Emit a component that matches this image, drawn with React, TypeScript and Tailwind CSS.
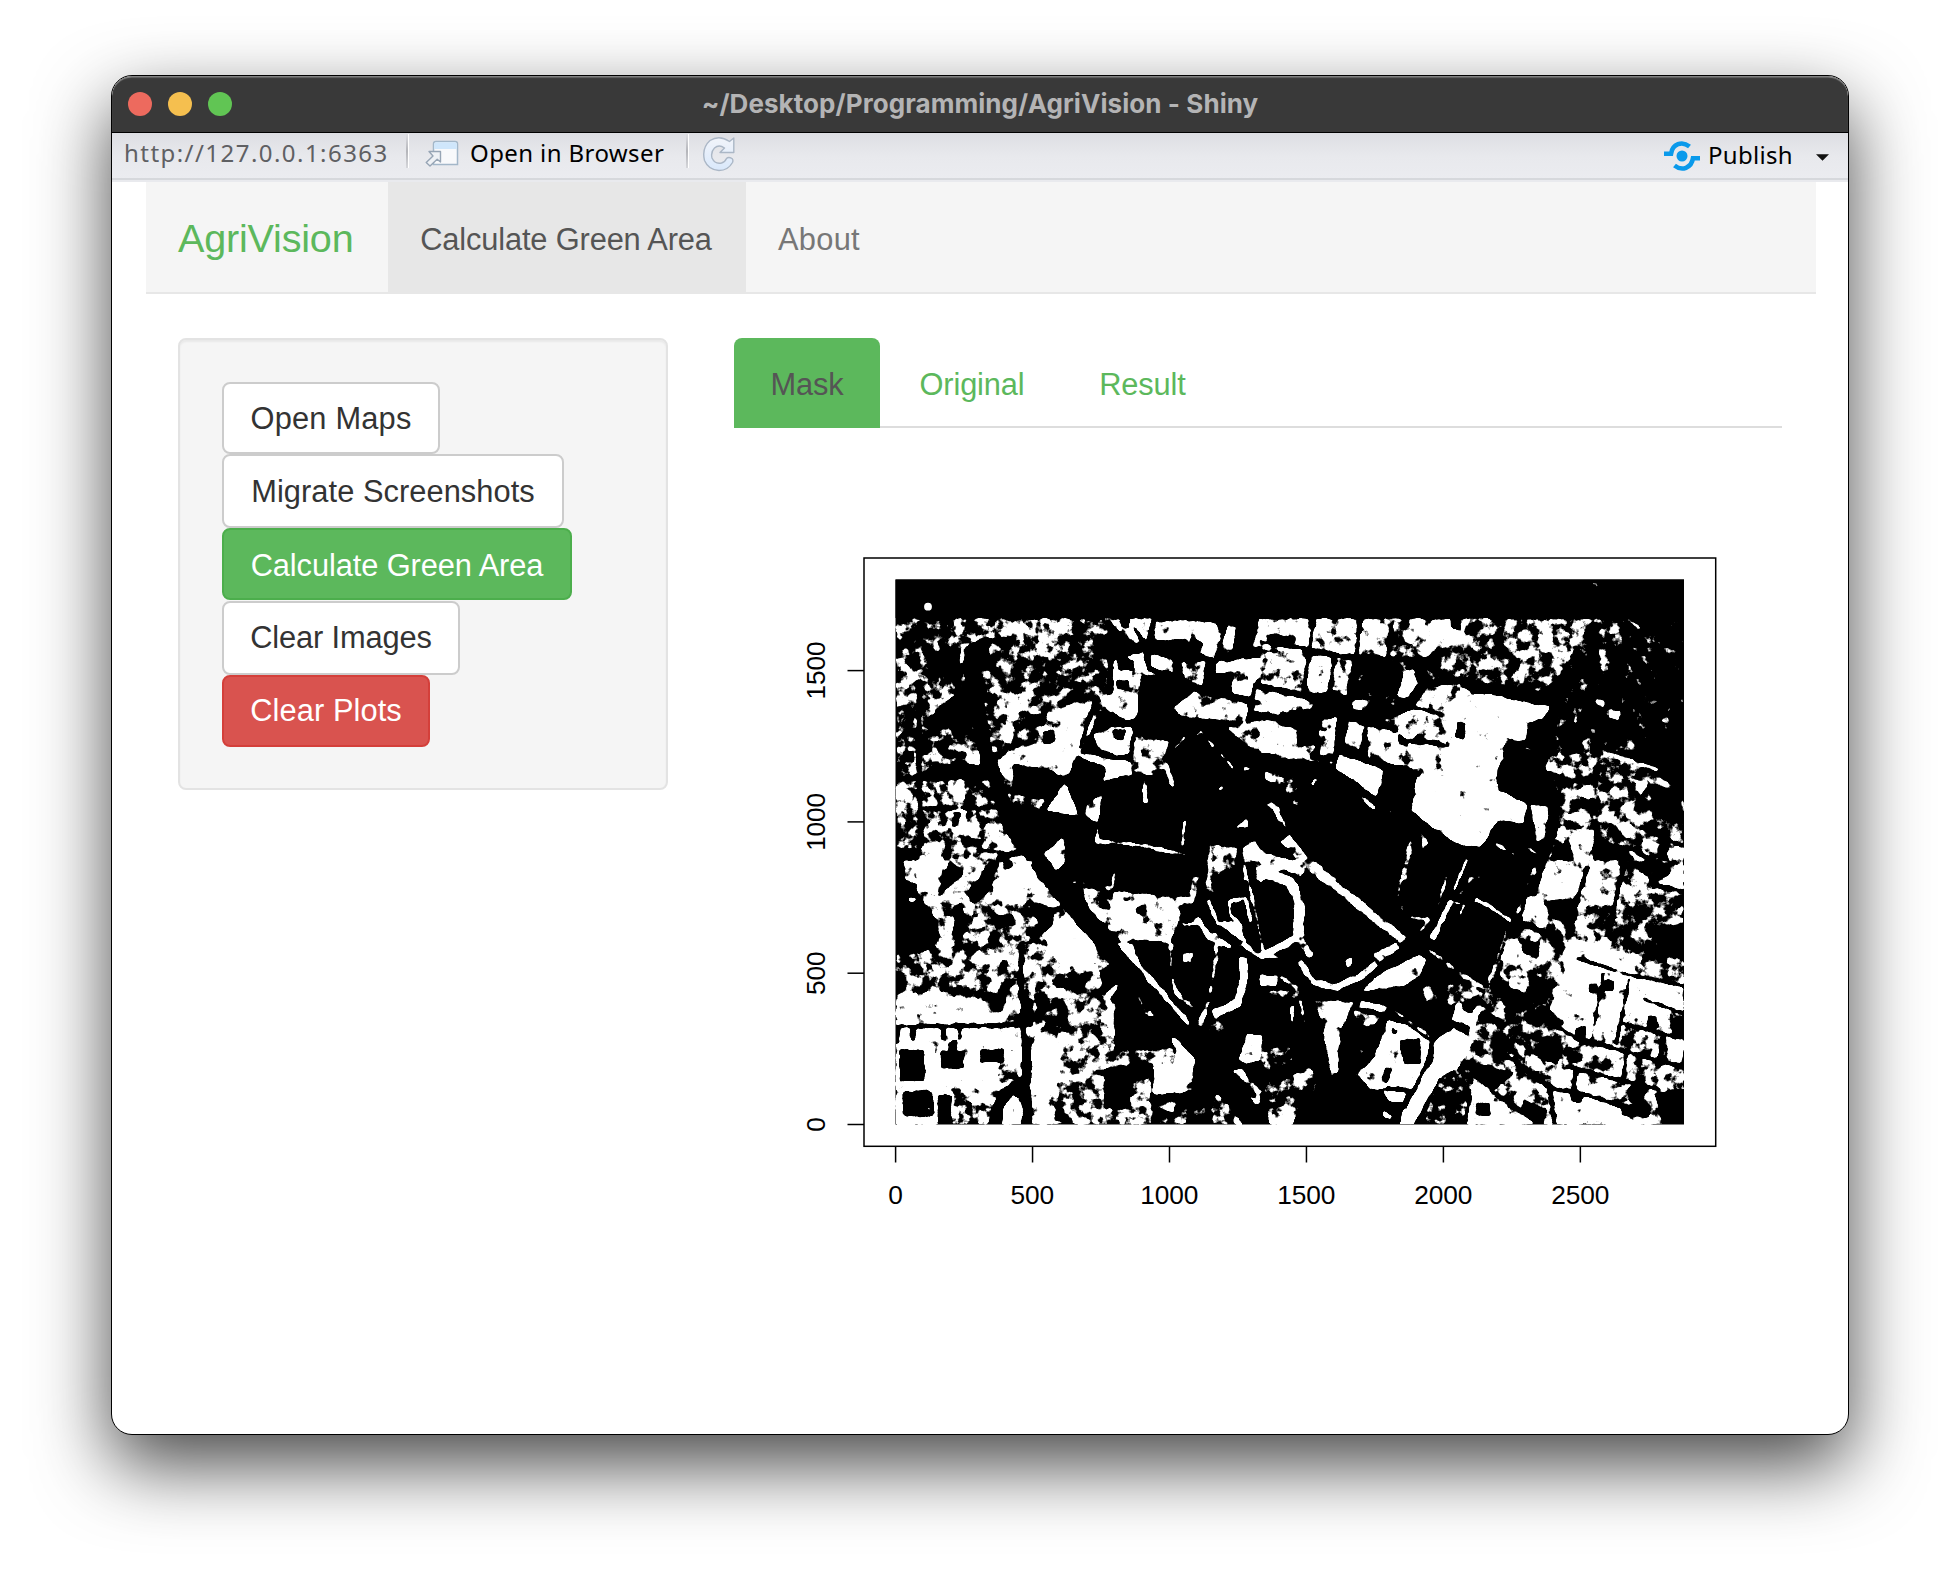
import React from 'react';

type Shape = [number, string];
type Stroke = [number, number, string];

interface Tile {
  x: number;
  y: number;
  areas: Shape[];
  strips: Stroke[];
  roads: [number, string][];
}

/* Vegetation density per area: 0 is bare, 1 is fully covered. */
const tiles: Tile[] = [
  {
    x: 0,
    y: 0,
    areas: [
      [0.44, '347,235 985,235 985,480 900,620 640,640 347,720'],
      [0.36, '347,270 500,290 520,440 347,350'],
      [0.47, '347,720 700,720 700,930 347,930'],
      [0.6, '665,240 880,235 860,345 780,330 740,290 660,295'],
      [0.6, '670,270 760,270 760,300 665,295'],
      [0.76, '985,235 1115,235 1100,320 1060,310 1000,260'],
      [0.76, '1125,245 1230,240 1310,245 1330,290 1310,360 1230,330 1220,300 1120,300'],
      [0.7, '1430,235 1500,235 1500,330 1420,320'],
      [0.74, '1335,250 1375,260 1355,340 1325,345'],
      [0, '1370,262 1422,258 1412,362 1356,350'],
      [0, '1235,295 1270,310 1260,335 1225,325'],
      [0, '1140,300 1185,300 1180,330 1145,325'],
      [0, '1020,240 1050,240 1045,265 1025,262'],
      [0.8, '1310,365 1500,345 1500,410 1430,420 1410,470 1365,465 1305,400'],
      [0, '1310,402 1360,400 1355,460 1305,450'],
      [0.7, '1180,500 1240,455 1405,490 1400,550 1200,530'],
      [0.72, '1425,445 1500,455 1500,525 1420,510'],
      [0.66, '1340,560 1500,530 1500,650 1400,620'],
      [0.76, '1000,360 1090,335 1105,390 1180,440 1085,410 1080,530 1040,545 940,480 1000,460'],
      [0, '1010,350 1060,360 1060,390 1020,390'],
      [0, '1010,420 1045,420 1045,448 1012,445'],
      [0.76, '1105,340 1180,355 1180,400 1110,380'],
      [0.66, '1200,365 1275,365 1270,440 1215,420'],
      [0, '1085,412 1130,405 1180,435 1180,500 1205,535 1260,560 1180,610 1160,580 1065,565'],
      [0.76, '940,580 1000,560 1060,560 1050,640 1010,650 950,620'],
      [0, '1000,570 1040,570 1030,600 1005,595'],
      [0.62, '1065,585 1168,600 1145,715 1045,690'],
      [1, '900,638 1050,665 1055,705 970,722 980,682 895,652'],
      [0.78, '880,490 945,490 940,560 860,715 800,690 700,672 660,650 720,620 800,610 770,560 810,520'],
      [0, '745,530 800,520 790,560 750,555'],
      [0, '785,575 820,570 825,605 790,610'],
      [0.76, '650,460 740,460 740,500 710,520 695,610 670,600 680,530 650,490'],
      [0.68, '347,350 380,355 400,420 347,490'],
      [0.64, '450,500 530,500 520,540 460,530'],
      [0.7, '347,620 415,620 410,670 347,670'],
      [0, '370,635 400,635 400,665 370,665'],
      [0.74, '560,630 605,630 600,680 560,670'],
      [0.6, '400,460 550,465 550,500 410,485'],
      [0.85, '503,718 552,718 550,782 522,782'],
      [0.62, '347,720 410,740 410,820 347,830'],
      [0.76, '455,750 480,800 440,800'],
      [0.76, '495,808 585,810 605,900 540,880 495,870'],
      [0, '520,815 545,815 535,860 518,860'],
      [0.85, '810,790 855,725 900,830 800,812'],
      [0.58, '700,760 800,780 780,810 700,790'],
      [0.8, '920,790 970,760 955,850 910,830'],
      [0.85, '430,910 495,915 490,1020 395,1020'],
      [0.58, '515,920 655,930 640,1020 500,1020'],
      [0.64, '610,860 665,850 670,935 610,930'],
      [0.78, '680,880 718,930 670,940'],
      [0.85, '690,950 735,940 800,1020 660,1020'],
      [0.8, '635,655 700,655 700,720 675,720'],
      [0.9, '786,945 850,890 845,980 826,992'],
      [0.54, '1285,910 1370,920 1370,980 1285,1020'],
      [0.7, '1385,920 1425,905 1480,960 1480,1020 1390,1020'],
      [0, '1400,970 1425,970 1430,1020 1400,1020'],
      [0.65, '1460,700 1500,690 1500,730 1470,730'],
      [0.65, '1465,780 1500,800 1500,860'],
      [0.85, '1360,865 1400,835 1410,865'],
      [0.85, '1390,680 1415,680 1410,695 1390,695'],
      [0, '550,300 625,295 630,380 560,380'],
      [0, '440,340 540,330 530,410 450,400'],
      [0, '420,560 600,400 620,450 560,570'],
    ],
    strips: [
      [0.72, 12, '945,903 1080,915 1220,945'],
      [0.72, 10, '1215,840 1205,925'],
      [0.72, 10, '955,850 950,905'],
      [0.75, 14, '1092,715 1096,790'],
      [0.55, 16, '1155,665 1180,745'],
      [0.78, 8, '1185,625 1215,590'],
      [0.8, 8, '1245,590 1262,575 1300,618'],
      [0.8, 8, '1320,640 1360,685'],
      [0.68, 10, '855,895 850,975'],
      [0.75, 12, '1315,750 1330,740'],
      [0.62, 6, '1005,940 1000,1020'],
      [0.74, 14, '545,370 550,320 600,292 640,285'],
    ],
    roads: [
      [38, '560,330 590,480 610,610 640,700 690,860'],
      [48, '690,850 820,1020'],
      [8, '1120,235 1102,380'],
      [8, '985,335 1080,318 1200,340 1310,368'],
      [9, '1342,240 1306,372'],
      [9, '1060,260 1100,320'],
      [9, '1180,440 1420,485 1500,500'],
      [7, '1430,235 1412,350'],
      [8, '1412,322 1500,335'],
      [8, '1425,430 1402,550'],
      [8, '1200,345 1190,450'],
      [9, '945,480 900,625'],
      [7, '420,806 660,802'],
      [6, '590,930 720,942'],
      [10, '1280,370 1290,450'],
      [9, '870,460 960,480'],
      [10, '420,420 415,640 425,900'],
    ],
  },
  {
    x: 1440,
    y: 0,
    areas: [
      [0.7, '0,235 200,235 390,235 380,350 0,330'],
      [0, '20,285 105,290 100,312 20,305'],
      [0.48, '390,235 1000,235 960,380 880,460 700,435 540,400 390,350'],
      [0.22, '360,350 540,350 540,410 480,480 400,500 280,450 280,385'],
      [0.78, '450,240 620,240 610,300 500,345 440,300'],
      [0, '570,240 600,240 600,270 575,265'],
      [0.62, '800,240 1000,240 960,370 880,350 780,300'],
      [0.24, '1000,235 1272,235 1272,640 880,640 900,400'],
      [0.42, '990,240 1100,240 1060,310 1000,320'],
      [0.48, '1010,320 1040,330 1030,420'],
      [0.42, '1110,320 1180,320 1180,400'],
      [0.7, '1005,480 1035,480 1030,500 1010,495'],
      [0.85, '1050,510 1082,515 1075,540 1050,535'],
      [0.9, '940,530 952,530 950,550 942,550'],
      [0.68, '0,335 140,335 130,460 0,430'],
      [0.82, '145,345 218,350 205,460 140,460'],
      [0.68, '228,350 278,360 262,470 215,450'],
      [0.72, '0,450 90,465 170,490 150,510 0,520'],
      [0.76, '0,535 120,570 170,620 150,660 0,640'],
      [0, '110,570 170,575 165,615 115,615'],
      [0.2, '170,455 240,470 240,520 180,510'],
      [0.62, '175,540 232,530 222,650 180,650'],
      [0.7, '270,480 332,480 330,515 280,510'],
      [0.7, '265,540 315,560 300,630 240,610'],
      [0.75, '322,560 400,570 450,610 560,620 520,700 320,655'],
      [0, '415,570 450,590 440,620 415,605'],
      [1, '435,395 462,388 472,430 440,475 412,465 422,430'],
      [0.68, '470,490 500,440 600,430 660,480 600,620 560,620 440,560'],
      [0.68, '370,540 470,500 540,530 560,600 440,600'],
      [0.9, '570,490 650,460 700,465 870,500 850,535 805,550 800,600 750,620 710,690 720,750 802,795 790,850 710,850 660,922 600,915 540,880 450,810 470,710 490,640 580,615'],
      [0.7, '480,640 560,640 520,710 470,700'],
      [0, '590,545 615,550 612,600 588,590'],
      [0.3, '740,590 770,600 830,640 720,690'],
      [0, '760,620 880,640 850,720 830,780 720,750 710,700'],
      [1, '235,640 372,690 350,772 228,685'],
      [0, '372,690 468,712 455,800 440,830 350,780'],
      [0, '715,840 790,855 700,900 690,880'],
      [0.46, '870,640 1000,640 1120,660 1272,760 1272,960 1000,900 900,880 880,760'],
      [0.2, '1160,720 1260,760 1272,850 1180,830'],
      [0.58, '970,600 1000,590 990,640 950,650'],
      [0.74, '860,645 912,650 900,705 860,690'],
      [0.88, '935,760 1000,730 990,775'],
      [0.7, '910,818 1010,828 1000,850 910,840'],
      [0.66, '1030,830 1120,780 1130,880 1080,870'],
      [0.8, '1125,720 1162,730 1140,775'],
      [0.78, '890,860 1005,870 1000,960 940,960 890,900'],
      [0, '890,915 930,910 940,970 880,970'],
      [0.8, '1150,895 1195,915 1170,950 1145,940'],
      [0.8, '1100,925 1160,960 1140,985'],
      [0.8, '1220,940 1272,900 1272,1020 1240,1000'],
      [0.8, '865,975 970,980 970,1020 855,1020'],
      [0.74, '810,790 865,800 855,900 830,905'],
      [0.38, '30,670 120,720 110,800 40,780'],
      [0.7, '15,690 50,700 40,730 15,720'],
      [0.64, '480,870 510,910 485,935'],
      [0.4, '1180,940 1230,970 1200,1010 1160,990'],
    ],
    strips: [
      [0.75, 14, '1030,640 1110,660 1195,692'],
      [0.9, 6, '1105,238 1135,262 1155,295'],
      [0.85, 7, '705,910 765,945'],
      [0.88, 7, '622,955 597,1020'],
      [0.64, 34, '75,895 130,960 220,1030'],
      [0.8, 8, '20,790 60,830 85,875'],
      [0.56, 14, '455,900 435,1020'],
      [0.72, 30, '0,950 60,965 130,1000'],
      [0.68, 12, '300,770 345,805'],
      [0.8, 9, '155,735 170,715'],
      [0.72, 6, '385,812 440,830'],
      [0.78, 6, '835,965 820,1020'],
      [0.74, 8, '790,915 835,945'],
      [0.66, 10, '60,650 220,668'],
      [0.8, 6, '890,890 860,980'],
      [0.6, 10, '1040,860 1130,900 1120,780'],
      [0.8, 5, '772,612 830,637'],
    ],
    roads: [
      [9, '0,305 160,330 390,370'],
      [9, '160,240 132,460'],
      [8, '225,350 200,490'],
      [9, '300,240 285,400 245,620'],
      [9, '0,440 160,480'],
      [9, '0,525 200,570'],
      [6, '470,592 550,616'],
      [6, '340,655 480,705'],
      [7, '380,480 550,525'],
      [9, '390,560 320,540'],
      [12, '505,870 600,920'],
      [8, '1010,860 1000,940'],
      [8, '1140,860 1272,920'],
      [8, '400,240 380,340'],
    ],
  },
  {
    x: 0,
    y: 960,
    areas: [
      [0.64, '347,0 760,0 1240,560 1240,795 347,795'],
      [0, '347,0 372,0 370,60 410,70 412,100 470,180 478,232 430,275 347,285'],
      [0.9, '410,0 490,0 470,100 410,90'],
      [0.9, '385,110 408,115 400,130 385,125'],
      [0, '485,60 510,0 545,45 475,110'],
      [0, '600,50 635,0 655,10 625,90 580,135 560,100'],
      [0, '672,0 695,0 690,40 672,40'],
      [0.54, '520,130 760,110 760,260 520,280'],
      [0, '520,140 545,130 560,210 530,250'],
      [0, '650,165 700,165 690,210 650,205'],
      [0.56, '430,290 720,180 730,400 347,400 347,345'],
      [0.4, '347,310 430,290 470,340 347,350'],
      [0.42, '347,370 560,370 560,395 347,400'],
      [0.8, '347,410 590,410 650,495 347,495'],
      [0.25, '600,400 680,390 670,460 620,440'],
      [0.85, '640,40 760,0 810,70 700,130 640,110'],
      [0.2, '745,120 830,150 800,262 750,240 770,180'],
      [1, '790,225 860,160 900,210 950,260 930,330 830,300'],
      [0.58, '730,330 970,330 980,600 900,640 730,430'],
      [0.25, '830,340 915,335 915,400 830,380'],
      [0.36, '765,410 862,410 860,517 770,512'],
      [0, '735,410 760,420 755,500 735,500'],
      [0.88, '347,505 720,505 725,600 690,690 347,690'],
      [0.6, '640,620 720,600 720,680 640,690'],
      [0, '345,505 362,505 358,550 345,550'],
      [0, '390,500 408,500 406,542 392,542'],
      [0, '482,500 496,500 494,535 484,535'],
      [0, '533,500 546,500 545,540 535,540'],
      [0, '360,570 433,570 433,662 360,662'],
      [0, '483,572 551,572 551,625 483,625'],
      [0, '505,550 530,540 535,575 505,575'],
      [0, '602,570 670,568 670,606 602,606'],
      [0.85, '347,665 470,665 520,700 520,795 347,795'],
      [0, '376,693 454,693 460,700 460,762 454,769 376,769 369,760 369,700'],
      [1, '440,741 453,741 453,753 440,753'],
      [0, '474,705 514,705 514,792 474,792'],
      [0.58, '520,700 640,700 640,795 520,795'],
      [0, '560,725 572,725 572,762 560,762'],
      [0, '640,740 660,690 720,655 745,670 740,700 690,715 670,750 665,795 635,795'],
      [0.9, '670,745 700,700 728,740 722,795 680,795'],
      [0.92, '750,560 780,520 850,570 845,640 830,680 750,680'],
      [0.56, '850,520 960,520 1000,620 970,650 975,750 1110,740 1110,795 850,795 830,680'],
      [0.74, '745,690 830,690 850,795 745,795'],
      [0.1, '825,730 855,725 850,780 825,780'],
      [0, '960,330 1030,320 1140,470 1250,580 1245,600 1190,600 1180,560 1120,570 1005,570 1005,430 970,400'],
      [0.8, '975,400 1020,365 1010,390 985,420'],
      [0.66, '970,500 1003,500 1003,570 975,560'],
      [0, '975,626 1120,605 1120,705 1050,710 1050,745 975,745'],
      [0.52, '990,575 1120,575 1120,610 990,620'],
      [0.52, '1050,660 1115,650 1110,730 1060,725'],
      [1, '1122,620 1235,608 1215,713 1120,706'],
      [0.95, '1170,530 1190,540 1248,600 1235,620 1190,612 1188,570'],
      [0.2, '1115,706 1260,690 1300,795 1115,795'],
      [0.6, '1130,720 1190,730 1180,755 1130,750'],
      [0.74, '900,80 1160,108 1250,110 1200,180 1170,250 1060,240 1030,250 930,150'],
      [0.2, '965,90 1000,95 990,150 960,145'],
      [0.1, '1070,140 1100,135 1095,165 1070,160'],
      [0.95, '1010,250 1060,250 1080,310 1160,400 1230,490 1225,505 1060,310'],
      [0, '1070,250 1130,260 1180,340 1165,400 1080,310'],
      [0, '1180,225 1300,250 1290,420 1240,440 1180,400'],
      [0.76, '1210,280 1240,275 1235,310 1210,305'],
      [0, '1195,140 1255,125 1260,180 1210,170'],
      [0.7, '1070,400 1110,440 1130,470 1090,465'],
      [0.88, '1322,190 1385,190 1400,245 1325,225'],
      [0.66, '1285,0 1305,100 1275,95'],
      [0.85, '1395,0 1475,35 1440,75 1425,20'],
      [0.85, '1440,350 1495,345 1490,378 1450,378'],
      [0.84, '1400,520 1447,525 1445,600 1400,610 1375,600'],
      [0.35, '1280,480 1390,480 1370,525 1280,520'],
      [0.72, '1355,630 1385,625 1450,700 1440,735 1420,730'],
      [0.58, '1310,700 1350,740 1390,795 1300,795 1290,750'],
      [0.4, '1440,570 1500,570 1500,690 1450,680'],
      [0.82, '1470,780 1500,740 1500,795 1470,795'],
      [0.6, '1180,770 1230,770 1210,795 1180,795'],
      [0.7, '1235,45 1255,50 1250,110 1225,105'],
    ],
    strips: [
      [0.68, 14, '1172,250 1172,340 1190,400 1240,445'],
      [0.68, 14, '1310,250 1305,320 1290,400'],
      [0.76, 16, '1285,420 1260,500'],
      [0.92, 26, '1390,290 1392,350 1372,430 1300,462'],
      [0.9, 18, '1250,175 1290,230 1330,255'],
      [0.88, 14, '1300,220 1350,265'],
      [0.92, 12, '1390,250 1430,285 1500,293'],
      [0.9, 10, '1380,190 1352,165 1348,125 1395,113 1412,185'],
      [0.85, 7, '1395,20 1430,170 1452,285'],
      [0.82, 11, '1285,120 1312,190 1380,190'],
      [0.58, 8, '850,60 1000,85'],
      [0.62, 5, '1003,0 998,85'],
      [0.8, 10, '1190,170 1215,195 1250,190'],
    ],
    roads: [
      [52, '770,0 850,100 940,210'],
      [50, '900,160 1060,350 1160,470'],
      [50, '1140,440 1280,600 1430,790'],
      [90, '1290,560 1310,620'],
      [10, '347,500 725,495'],
      [12, '724,260 722,400 730,500 738,600'],
      [26, '740,540 740,795'],
      [16, '1280,160 1330,215 1420,280'],
      [10, '1365,640 1425,710'],
    ],
  },
  {
    x: 1440,
    y: 960,
    areas: [
      [0.6, '860,0 1272,0 1272,795 620,795 640,690 560,620 700,390 740,270 800,190'],
      [0.4, '640,400 740,370 820,330 900,430 850,620 760,640 640,560'],
      [0.15, '700,330 780,400 830,440 760,460 700,400'],
      [0.1, '830,350 890,370 850,430 800,420'],
      [0.82, '860,10 972,25 950,110 830,95'],
      [0.78, '800,110 850,110 860,230 785,185'],
      [0.2, '850,120 960,120 940,210 870,170'],
      [0.78, '985,30 1075,40 1040,130 960,100'],
      [0.2, '1110,10 1200,0 1240,40 1180,70'],
      [0.9, '1200,70 1272,10 1272,90'],
      [0.46, '1000,150 1272,120 1272,290 1150,310 1000,230'],
      [0.2, '1160,200 1272,190 1272,300 1170,280'],
      [0.8, '905,220 1010,260 1150,290 1140,330 1080,540 950,510 870,450 920,330'],
      [0.3, '860,160 900,210 920,270 870,260'],
      [0.84, '1100,350 1272,380 1272,450 1080,480'],
      [0, '840,540 905,555 890,612 838,590'],
      [0, '988,372 1015,368 1012,398 988,398'],
      [0, '1030,362 1062,362 1060,392 1032,390'],
      [0, '948,500 975,500 972,532 948,530'],
      [0, '930,580 970,580 965,605 930,605'],
      [0, '1165,470 1190,470 1190,505 1165,505'],
      [0, '1235,485 1272,490 1272,525 1240,520'],
      [0.58, '1090,500 1200,520 1190,590 1080,560'],
      [0.88, '885,690 1080,735 1130,795 885,795'],
      [0.84, '875,650 945,620 940,690 880,680'],
      [0.7, '950,640 1100,670 1080,725 950,695'],
      [0, '930,700 970,710 965,730 935,725'],
      [0, '1180,700 1272,690 1272,795 1210,795 1200,740'],
      [0, '1080,735 1165,730 1165,770 1090,765'],
      [0, '1110,680 1150,690 1145,730 1110,725'],
      [0.95, '1222,530 1272,540 1262,605 1225,590'],
      [0.82, '1225,615 1250,620 1245,650 1220,640'],
      [0.72, '740,230 860,260 830,330 720,300'],
      [0.05, '775,240 840,245 830,290 790,280'],
      [0.85, '750,350 805,360 790,395 750,380'],
      [0, '560,190 735,200 690,370 515,270'],
      [0.84, '305,395 340,350 480,285 500,300 480,350 420,380'],
      [0.76, '340,280 410,245 420,265 360,310'],
      [0.85, '255,300 275,295 275,320 258,320'],
      [0.8, '160,420 282,425 240,520 235,640 212,652 190,500'],
      [0.76, '300,420 385,440 375,460 300,440'],
      [0.58, '280,450 370,470 340,500 290,500'],
      [0.9, '380,480 440,495 520,550 500,600 460,688 400,680 330,690 292,640 345,590'],
      [0.2, '395,500 420,510 410,525 395,520'],
      [0, '418,540 480,535 482,610 430,612'],
      [0.3, '370,620 395,625 385,670 365,665'],
      [0.1, '250,510 335,500 310,620 290,650 240,660'],
      [1, '520,550 580,500 632,535 600,620 540,650 500,720 460,795 415,795 440,720 520,600'],
      [1, '590,430 665,445 640,502 575,480'],
      [0, '605,430 650,440 635,460 605,450'],
      [0.42, '480,380 640,365 680,420 500,440'],
      [0, '470,450 560,440 560,500 520,525 460,490'],
      [0.84, '640,670 690,690 740,740 830,795 620,795'],
      [0, '650,728 690,728 690,765 655,765'],
      [0.68, '730,520 830,590 890,650 850,660'],
      [0.68, '760,640 860,680 840,740 740,690'],
      [0, '640,610 760,640 700,690 640,650'],
      [0, '790,720 860,750 845,790 790,750'],
      [0.36, '540,650 640,600 640,670 610,795 480,795'],
      [0.54, '0,690 150,620 172,655 130,690 20,700'],
      [0.74, '20,750 70,720 125,740 100,795 30,795'],
      [0.3, '0,700 130,690 125,740 0,740'],
      [0.85, '365,690 440,695 430,730 385,720'],
      [0.85, '370,750 400,770 390,785 368,765'],
      [0.85, '90,440 105,430 100,490 90,485'],
      [0.95, '0,345 40,350 40,378 0,378'],
      [0.38, '0,560 100,560 100,620 0,610'],
      [0.42, '0,390 130,390 120,420 0,410'],
      [0.85, '0,0 120,0 125,40 60,30 20,60 0,60'],
    ],
    strips: [
      [0.76, 28, '120,-5 260,105 430,240'],
      [0.88, 32, '45,50 90,65 118,130 115,230'],
      [0.84, 22, '115,230 60,260 0,290'],
      [0.66, 26, '120,240 155,290'],
      [0.86, 22, '115,300 160,365 230,382 300,350 350,310'],
      [0.92, 7, '620,0 582,90'],
      [0.88, 7, '560,50 535,135'],
      [0.82, 18, '575,120 515,240'],
      [0.86, 8, '580,125 612,135 600,165'],
      [0.68, 14, '635,50 600,105'],
      [0.76, 12, '645,118 690,140 755,185'],
      [0.7, 7, '822,20 770,165'],
      [0.7, 8, '740,210 685,370'],
      [0.64, 14, '500,262 600,340 690,395'],
      [0.62, 14, '440,0 410,110'],
      [0.68, 10, '425,130 430,175'],
      [0.68, 12, '450,170 505,180 480,215'],
      [0.56, 10, '720,300 680,400 690,440'],
      [0.74, 12, '60,350 112,385'],
      [0.6, 8, '120,420 140,510'],
      [0.6, 12, '400,450 510,530'],
      [0.62, 7, '170,650 160,700'],
      [0.64, 12, '1000,170 990,220'],
      [0.72, 10, '660,440 740,480'],
    ],
    roads: [
      [14, '790,190 900,240'],
      [8, '950,295 1110,345 1272,378'],
      [7, '1030,340 995,540'],
      [8, '1108,355 1068,555'],
      [9, '945,535 1100,575 1272,622'],
      [9, '800,440 900,505 950,535'],
      [8, '1150,418 1272,460'],
      [7, '1085,490 1272,537'],
      [10, '985,20 935,160'],
      [9, '1090,20 1050,200'],
      [10, '920,620 1060,655 1200,690'],
      [10, '700,560 800,630 870,685 960,700 1080,738'],
      [9, '868,680 885,795'],
      [7, '948,620 940,700'],
      [7, '1100,580 1088,670'],
      [9, '1210,530 1195,620'],
      [8, '690,690 835,790'],
      [7, '375,480 310,625'],
      [8, '515,540 510,600 435,740'],
      [9, '380,680 450,695'],
      [12, '1272,95 1180,75'],
      [9, '300,390 430,270'],
    ],
  },
];

function gray(v: number) {
  const n = Math.round(v * 255);
  return `rgb(${n},${n},${n})`;
}

function Plot() {
  const xs = [0, 500, 1000, 1500, 2000, 2500];
  const ys = [0, 500, 1000, 1500];
  return (
    <svg className="block h-[800px] w-[1048px]" viewBox="734 458 1048 800" fontFamily="'Liberation Sans', Arial, sans-serif" fontSize="26.3">
      <defs>
        <clipPath id="raster">
          <rect x="895.5" y="579.5" width="788.5" height="545" />
        </clipPath>
        <filter id="speckle" filterUnits="userSpaceOnUse" x="880" y="570" width="820" height="565" colorInterpolationFilters="sRGB">
          <feTurbulence type="fractalNoise" baseFrequency="0.085" numOctaves="4" seed="11" result="t" />
          <feColorMatrix in="t" type="matrix" values="0 0 0 1 0  0 0 0 1 0  0 0 0 1 0  0 0 0 0 1" result="n" />
          <feGaussianBlur in="SourceGraphic" stdDeviation="1" result="d" />
          <feComposite in="d" in2="n" operator="arithmetic" k1="0" k2="1" k3="1.2" k4="-0.62" result="s" />
          <feComponentTransfer in="s">
            <feFuncR type="linear" slope="8" intercept="-3.6" />
            <feFuncG type="linear" slope="8" intercept="-3.6" />
            <feFuncB type="linear" slope="8" intercept="-3.6" />
            <feFuncA type="linear" slope="0" intercept="1" />
          </feComponentTransfer>
        </filter>
      </defs>
      <g clipPath="url(#raster)">
        <g filter="url(#speckle)">
          <rect x="880" y="570" width="820" height="565" fill="#000" />
          <g transform="translate(780 540) scale(0.33333)" fill="none" strokeLinejoin="round">
            {tiles.map((t, i) => (
              <g key={i} transform={`translate(${t.x} ${t.y})`}>
                {t.areas.map(([v, p], k) => (
                  <polygon key={k} points={p} fill={gray(v)} />
                ))}
                {t.roads.map(([w, p], k) => (
                  <polyline key={k} points={p} stroke="#000" strokeWidth={w} />
                ))}
                {t.strips.map(([v, w, p], k) => (
                  <polyline key={k} points={p} stroke={gray(v)} strokeWidth={w} />
                ))}
              </g>
            ))}
          </g>
        </g>
        <rect x="895" y="579" width="790" height="39" fill="#000" />
        <circle cx="928" cy="606.7" r="3.9" fill="#fff" />
        <path d="M1593 583.5l3 .5 1 2" stroke="#999" strokeWidth="1.2" fill="none" />
      </g>
      <g fill="none" stroke="#000" strokeWidth="1.5">
        <rect x="864" y="558" width="851.7" height="588.3" />
        {xs.map((v, i) => (
          <path key={v} d={`M${895.6 + i * 136.95} 1146v16.5`} />
        ))}
        {ys.map((v, i) => (
          <path key={v} d={`M864 ${1124.5 - i * 151.3}h-16.5`} />
        ))}
      </g>
      <g fill="#000" textAnchor="middle">
        {xs.map((v, i) => (
          <text key={v} x={895.4 + i * 136.95} y="1204">{v}</text>
        ))}
        {ys.map((v, i) => (
          <text key={v} transform={`translate(825.3 ${1124.5 - i * 151.3}) rotate(-90)`}>{v}</text>
        ))}
      </g>
    </svg>
  );
}

function OpenIcon() {
  return (
    <svg className="h-[28px] w-[34px]" viewBox="0 0 34 28" fill="none">
      <path d="M8.500 24.500V4Q8.500 1.500 11 1.500H30Q32.500 1.500 32.500 4V24.500Z" fill="#f8f9fb" stroke="#a3b7c9" strokeWidth="1.500" />
      <path d="M9.200 9V4.300Q9.200 2.200 11.300 2.200H29.700Q31.800 2.200 31.800 4.300V9Z" fill="#cfe6fb" />
      <path d="M4 11.500H15.500V22L12.200 19.300L5 26L1.200 22.500L8 16Z" fill="#eef1f5" stroke="#97a5b5" strokeWidth="1.400" strokeLinejoin="round" />
    </svg>
  );
}

function ReloadIcon() {
  return (
    <svg className="h-[36px] w-[34px]" viewBox="0 0 34 36" fill="none">
      <defs>
        <linearGradient id="reload" x1="0" y1="0" x2="0" y2="1">
          <stop offset="0" stopColor="#f1f4fa" />
          <stop offset="1" stopColor="#d9e8fb" />
        </linearGradient>
      </defs>
      <path d="M27.500 5.500L31.800 2V16.500H18L22.500 12Q17 8 12.500 12Q8.500 16 10 22Q13 28.500 19.500 27Q23 26 24.500 22.500Q26.500 20.500 30 22.500Q31.500 24 30.500 26.500Q26 34.500 17 34.500Q6.500 34 2.500 24.500Q-0.500 12 8 4.500Q17.500 -1.500 27.500 5.500Z" fill="url(#reload)" stroke="#abb7c6" strokeWidth="1.400" strokeLinejoin="round" />
    </svg>
  );
}

function PublishIcon() {
  return (
    <svg className="h-[32px] w-[36px]" viewBox="0 0 36 32" fill="none" stroke="#0a9aeb" strokeWidth="4.600">
      <path d="M0 13.800H7C8.500 4 18 0.500 25.500 6.500" />
      <path d="M36 18.200H29C27.500 28 18 31.500 10.500 25.500" />
      <circle cx="18" cy="16" r="5.500" fill="#0a9aeb" stroke="none" />
    </svg>
  );
}

function Separator() {
  return (
    <div className="flex h-[34px] w-[3px]">
      <div className="w-[1.5px] bg-linear-to-b from-[#dcdde2] via-[#b4b5ba] to-[#d5d6da]" />
      <div className="w-[1.5px] bg-white" />
    </div>
  );
}

const buttons = [
  { label: 'Open Maps', box: 'w-[218px] h-[72px] bg-white border-[#ccc] text-[#333] tracking-[0.2px] pt-[3px]' },
  { label: 'Migrate Screenshots', box: 'w-[342px] h-[74px] bg-white border-[#ccc] text-[#333] tracking-[0.06px] pt-[2px]' },
  { label: 'Calculate Green Area', box: 'w-[350px] h-[72px] bg-[#5cb85c] border-[#4cae4c] text-white tracking-[-0.09px] pt-[4px]' },
  { label: 'Clear Images', box: 'w-[238px] h-[74px] bg-white border-[#ccc] text-[#333] tracking-[-0.14px] pt-[2px]' },
  { label: 'Clear Plots', box: 'w-[208px] h-[72px] bg-[#d9534f] border-[#d43f3a] text-white tracking-[0.1px] pt-[1px]' },
];

export default function App() {
  return (
    <div className="h-[1582px] w-[1960px] overflow-hidden bg-white pt-[75px] pl-[111px] font-['Liberation_Sans',Arial,sans-serif]">
      <div className="flex h-[1360px] w-[1738px] flex-col overflow-hidden rounded-[21px] border border-black bg-white shadow-[0_30px_75px_rgba(0,0,0,0.72)]">
        <header className="grid h-[57px] shrink-0 grid-cols-[1fr_auto_1fr] items-center rounded-t-[20px] border-b border-black bg-[#393939] shadow-[inset_0_2px_1px_-0.5px_#858585]">
          <div className="flex gap-4 pl-4">
            <div className="size-6 rounded-full bg-[#ed6a5e]" />
            <div className="size-6 rounded-full bg-[#f5bf4f]" />
            <div className="size-6 rounded-full bg-[#61c554]" />
          </div>
          <h1 className="pb-[2px] font-['Inter',sans-serif] text-[26px] font-bold tracking-[0.07px] whitespace-nowrap text-[#b4b4b5]">~/Desktop/Programming/AgriVision - Shiny</h1>
          <div />
        </header>

        <div className="flex h-[49px] shrink-0 border-b-2 border-[#e9eaee] bg-linear-to-b from-[#dddee3] via-[#e8e9ed] to-[#ebecf0]">
          <div className="flex flex-1 items-start border-b-2 border-[#d6d8dc] font-['Noto_Sans','Open_Sans',sans-serif] text-[24px] leading-[40px]">
            <span className="ml-[12px] w-[268px] text-[#5f6063] tracking-[1.45px] whitespace-nowrap">http://127.0.0.1:6363</span>
            <div className="ml-[14px] pt-[1px]"><Separator /></div>
            <div className="ml-[16px] pt-[7px]"><OpenIcon /></div>
            <span className="ml-[11px] w-[201px] whitespace-nowrap text-black tracking-[0.4px]">Open in Browser</span>
            <div className="ml-[15px] pt-[1px]"><Separator /></div>
            <div className="ml-[13px] pt-[3px]"><ReloadIcon /></div>
            <div className="ml-auto flex pr-[19px]">
              <div className="pt-[7px]"><PublishIcon /></div>
              <span className="ml-[8px] w-[90px] pt-[2px] whitespace-nowrap text-black tracking-[0.3px]">Publish</span>
              <svg className="mt-[21px] ml-[18px] h-[7px] w-[13px]" viewBox="0 0 14 7"><path d="M0 0H14L7 7Z" fill="#111" /></svg>
            </div>
          </div>
        </div>

        <main className="px-[34px] text-[30.8px] tracking-[-0.14px]">
          <nav className="mr-[-2px] flex h-[112px] border-b-2 border-[#e7e7e7] bg-[#f5f5f5] text-[#777]">
            <div className="flex w-[242px] items-center pl-[32px] pt-[3px] text-[39.6px] tracking-[-0.2px] text-[#5cb85c]">AgriVision</div>
            <div className="flex w-[358px] items-center justify-center bg-[#e7e7e7] pt-[6px] pr-[2px] text-[#555]">Calculate Green Area</div>
            <div className="flex items-center px-8 pt-[6px] tracking-[0.3px]">About</div>
          </nav>

          <div className="mt-[44px] flex pl-8">
            <aside className="flex h-[452px] w-[490px] flex-col items-start rounded-lg border-2 border-[#e3e3e3] bg-[#f5f5f5] p-[42px] shadow-[inset_0_2px_2px_rgba(0,0,0,0.05)]">
              {buttons.map((b) => (
                <button key={b.label} className={`mb-[0.2px] flex shrink-0 items-center justify-center rounded-lg border-2 whitespace-nowrap ${b.box}`}>
                  {b.label}
                </button>
              ))}
            </aside>

            <section className="ml-[66px] w-[1048px]">
              <div className="flex h-[90px] text-[#5cb85c] shadow-[inset_0_-2px_0_#ddd]">
                <div className="flex w-[146px] items-center justify-center rounded-t-lg bg-[#5cb85c] pt-[4px] text-[#555]">Mask</div>
                <div className="flex w-[180px] items-center justify-center pt-[4px] pl-[4px]">Original</div>
                <div className="flex w-[165px] items-center justify-center pt-[4px]">Result</div>
              </div>
              <div className="pt-[30px]"><Plot /></div>
            </section>
          </div>
        </main>
      </div>
    </div>
  );
}
